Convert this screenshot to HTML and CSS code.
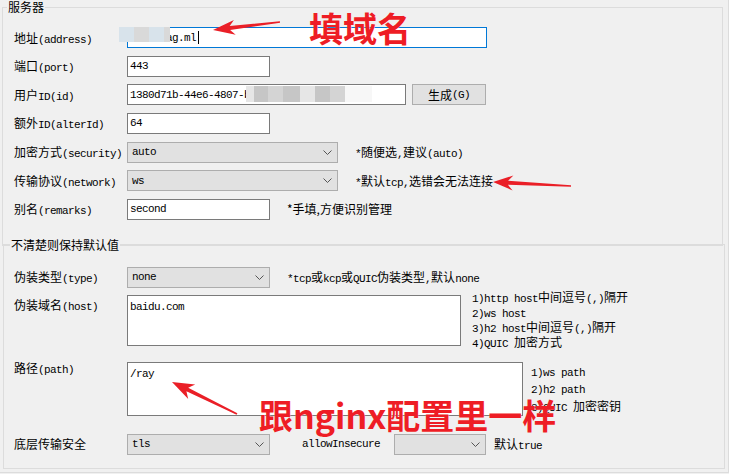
FILE: index.html
```html
<!DOCTYPE html>
<html lang="zh-CN">
<head>
<meta charset="utf-8">
<title>服务器</title>
<link rel="stylesheet" href="styles.css">
</head>
<body>
<div class="window">
  <fieldset class="group g1">
    <legend class="lg1">服务器</legend>
    <div class="body1">
      <div class="row">
        <span class="lbl">地址<span class="m">(address)</span></span>
        <div class="box w-addr focus"><span class="m val">xxxxxxag.ml</span><span class="caret"></span></div>
      </div>
      <div class="row">
        <span class="lbl">端口<span class="m">(port)</span></span>
        <div class="box w-s"><span class="m val">443</span></div>
      </div>
      <div class="row">
        <span class="lbl">用户<span class="m">ID(id)</span></span>
        <div class="box w-id"><span class="m val">1380d71b-44e6-4807-b</span></div>
        <div class="btn">生成<span class="m">(G)</span></div>
      </div>
      <div class="row">
        <span class="lbl">额外<span class="m">ID(alterId)</span></span>
        <div class="box w-s"><span class="m val">64</span></div>
      </div>
      <div class="row">
        <span class="lbl">加密方式<span class="m">(security)</span></span>
        <div class="sel w-l"><span class="m">auto</span><svg class="chev" width="9" height="5" viewBox="0 0 9 5"><path d="M0.5 0.5 L4.5 4.5 L8.5 0.5" fill="none" stroke="#555" stroke-width="1"/></svg></div>
        <span class="hint h1"><span class="m">*</span>随便选<span class="m">,</span>建议<span class="m">(auto)</span></span>
      </div>
      <div class="row">
        <span class="lbl">传输协议<span class="m">(network)</span></span>
        <div class="sel w-l"><span class="m">ws</span><svg class="chev" width="9" height="5" viewBox="0 0 9 5"><path d="M0.5 0.5 L4.5 4.5 L8.5 0.5" fill="none" stroke="#555" stroke-width="1"/></svg></div>
        <span class="hint h1"><span class="m">*</span>默认<span class="m">tcp,</span>选错会无法连接</span>
      </div>
      <div class="row">
        <span class="lbl">别名<span class="m">(remarks)</span></span>
        <div class="box w-s"><span class="m val">second</span></div>
        <span class="hint h2">*手填,方便识别管理</span>
      </div>
    </div>
  </fieldset>

  <fieldset class="group g2">
    <legend class="lg2">不清楚则保持默认值</legend>
    <div class="body2">
      <div class="row">
        <span class="lbl">伪装类型<span class="m">(type)</span></span>
        <div class="sel w-s"><span class="m">none</span><svg class="chev" width="9" height="5" viewBox="0 0 9 5"><path d="M0.5 0.5 L4.5 4.5 L8.5 0.5" fill="none" stroke="#555" stroke-width="1"/></svg></div>
        <span class="hint h2"><span class="m">*tcp</span>或<span class="m">kcp</span>或<span class="m">QUIC</span>伪装类型<span class="m">,</span>默认<span class="m">none</span></span>
      </div>
      <div class="row top r-host">
        <span class="lbl lbl-host">伪装域名<span class="m">(host)</span></span>
        <div class="area w-host"><span class="m">baidu.com</span></div>
        <div class="notes n-host">
          <div><span class="m">1)http host</span>中间逗号<span class="m">(,)</span>隔开</div>
          <div><span class="m">2)ws host</span></div>
          <div><span class="m">3)h2 host</span>中间逗号<span class="m">(,)</span>隔开</div>
          <div><span class="m">4)QUIC </span>加密方式</div>
        </div>
      </div>
      <div class="row top r-path">
        <span class="lbl lbl-path">路径<span class="m">(path)</span></span>
        <div class="area w-path"><span class="m">/ray</span></div>
        <div class="notes n-path">
          <div><span class="m">1)ws path</span></div>
          <div><span class="m">2)h2 path</span></div>
          <div><span class="m">3)QUIC </span>加密密钥</div>
        </div>
      </div>
      <div class="row r-tls">
        <span class="lbl">底层传输安全</span>
        <div class="sel w-s"><span class="m">tls</span><svg class="chev" width="9" height="5" viewBox="0 0 9 5"><path d="M0.5 0.5 L4.5 4.5 L8.5 0.5" fill="none" stroke="#555" stroke-width="1"/></svg></div>
        <span class="m allow">allowInsecure</span>
        <div class="sel w-xs"><span></span><svg class="chev" width="9" height="5" viewBox="0 0 9 5"><path d="M0.5 0.5 L4.5 4.5 L8.5 0.5" fill="none" stroke="#555" stroke-width="1"/></svg></div>
        <span class="hint h3">默认<span class="m">true</span></span>
      </div>
    </div>
  </fieldset>

  <div class="mosaic mz1">
    <span class="blk c-b" style="width:15px"></span><span class="blk c-g" style="width:15px"></span><span class="blk c-b" style="width:15px"></span><span class="blk c-g" style="width:6px"></span>
  </div>
  <div class="mosaic mz2">
    <span class="blk c-l" style="width:8px"></span><span class="blk c-m" style="width:14px"></span><span class="blk c-s" style="width:15px"></span><span class="blk c-m" style="width:17px"></span><span class="blk c-l" style="width:15px"></span><span class="blk c-m" style="width:15px"></span><span class="blk c-s" style="width:15px"></span><span class="blk c-w" style="width:27px"></span>
  </div>

  <svg class="arrows" width="729" height="474" viewBox="0 0 729 474">
    <polygon fill="#ea1f27" points="213,30 235.7,34.8 230.1,30.0 280.1,22.8 279.9,21.2 229.7,26.0 233.9,20.0"/>
    <polygon fill="#ea1f27" points="493,182 512.6,190.5 507.9,184.8 571,186.8 571,185.2 508.1,180.8 513.4,175.5"/>
    <polygon fill="#ea1f27" points="172,382 188.2,398.9 186.4,391.3 236.6,414.7 237.4,413.3 188.2,387.7 195.2,384.5"/>
  </svg>

  <div class="note note1">填域名</div>
  <div class="note note2">跟nginx配置里一样</div>
</div>
</body>
</html>
```

FILE: styles.css
```css
html, body {
  margin: 0;
  padding: 0;
}

body {
  background: #f0f0f0;
  color: #000;
  font-family: "Noto Sans CJK SC", "Liberation Sans", sans-serif;
  font-size: 12px;
  line-height: 14px;
}

.window {
  position: relative;
  width: 728px;
  height: 472px;
  border-right: 1px solid #dcdcdc;
  border-bottom: 1px solid #dcdcdc;
  overflow: hidden;
}

.m {
  font-family: "Liberation Mono", monospace;
  font-size: 11px;
  line-height: 8px;
  letter-spacing: -0.6px;
}

.group {
  border: 1px solid #dcdcdc;
  padding: 0;
  min-width: 0;
}

.g1 {
  margin: 0 5px 0 2px;
}

.g2 {
  margin: -8px 3px 0 3px;
}

legend {
  background: #f0f0f0;
  padding: 0 1px;
  line-height: 14px;
  font-size: 12px;
}

.lg1 { margin-left: 4px; }
.lg2 { margin-left: 6px; }

.body1 {
  padding: 13px 0 25px 11px;
  display: flex;
  flex-direction: column;
  gap: 7.67px;
}

.body2 {
  padding: 15px 0 13px 10px;
  display: flex;
  flex-direction: column;
}

.row {
  display: flex;
  align-items: center;
  height: 21px;
}

.row.top {
  align-items: flex-start;
  height: auto;
}

.r-host { margin-top: 7px; }
.r-path { margin-top: 16px; }
.r-tls { margin-top: 18px; }

.lbl {
  width: 113px;
  flex: none;
  white-space: nowrap;
}

.lbl-host { margin-top: 3px; }
.lbl-path { margin-top: -1px; }

.box {
  box-sizing: border-box;
  height: 21px;
  border: 1px solid #7a7a7a;
  background: #fff;
  padding: 0 2px;
  display: flex;
  align-items: center;
  flex: none;
  white-space: nowrap;
}

.box.focus { border-color: #0078d7; }

.caret {
  display: inline-block;
  width: 1px;
  height: 13px;
  background: #000;
  margin-left: 2px;
}

.w-addr { width: 360px; }
.w-s { width: 143px; }
.w-id { width: 279px; }
.w-l { width: 211px; }
.w-xs { width: 92px; }
.w-host { width: 334px; height: 51px; }
.w-path { width: 396px; height: 54px; }

.btn {
  box-sizing: border-box;
  width: 74px;
  height: 21px;
  margin-left: 6px;
  border: 1px solid #adadad;
  background: #e1e1e1;
  display: flex;
  align-items: center;
  justify-content: center;
  flex: none;
}

.sel {
  box-sizing: border-box;
  height: 21px;
  border: 1px solid #adadad;
  background: #e1e1e1;
  padding: 0 5px 0 4px;
  display: flex;
  align-items: center;
  justify-content: space-between;
  flex: none;
}

.chev { display: block; }

.area {
  box-sizing: border-box;
  border: 1px solid #7a7a7a;
  background: #fff;
  padding: 2px 2px 0 2px;
  flex: none;
}

.hint { white-space: nowrap; }
.h1 { margin-left: 17px; }
.h2 { margin-left: 17px; }
.h3 { margin-left: 8px; }

.notes { white-space: nowrap; }
.n-host {
  margin-left: 11px;
  margin-top: -6px;
  margin-bottom: -10px;
  line-height: 15px;
}
.n-path {
  margin-left: 8px;
  margin-top: 0;
  margin-bottom: -10px;
  line-height: 17.5px;
}

.allow {
  width: 92px;
  margin-left: 32px;
  flex: none;
}

.mosaic {
  position: absolute;
  display: flex;
}
.mz1 { left: 119px; top: 27px; height: 15px; }
.mz2 { left: 246px; top: 86px; height: 16px; }
.blk { display: block; height: 100%; }
.c-b { background: #d8e3eb; }
.c-g { background: #d9d9d9; }
.c-l { background: #e6e6e6; }
.c-m { background: #c6c6c6; }
.c-s { background: #d4d4d4; }
.c-w { background: #f7f7f7; }

.arrows {
  position: absolute;
  left: 0;
  top: 0;
  pointer-events: none;
}

.note {
  position: absolute;
  color: #ee1d25;
  font-family: "Noto Sans CJK SC", sans-serif;
  font-weight: 700;
  white-space: nowrap;
  text-shadow: 0 0 1px rgba(255, 255, 255, 0.7);
}

.note1 {
  left: 309px;
  top: 11px;
  font-size: 34px;
  line-height: 34px;
}

.note2 {
  left: 259px;
  top: 398px;
  font-size: 34px;
  line-height: 34px;
}
```
